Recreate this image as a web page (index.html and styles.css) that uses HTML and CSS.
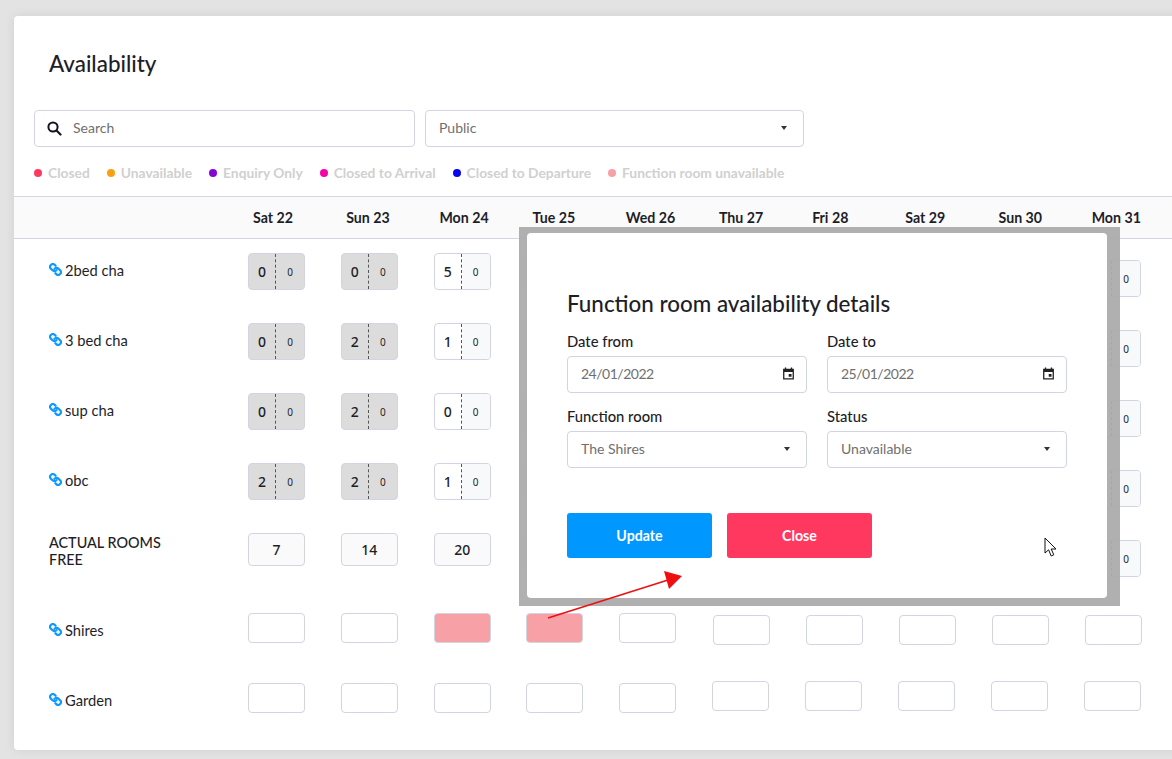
FILE: index.html
```html
<!DOCTYPE html>
<html lang="en">
<head>
  <meta charset="UTF-8">
  <title>Availability</title>
  <link rel="stylesheet" href="styles.css">
</head>
<body>
  <svg class="defs" width="0" height="0">
    <symbol id="chain" viewBox="0 0 24 24">
      <g transform="translate(24 0) scale(-1 1)" fill="none" stroke="currentColor" stroke-width="4" stroke-linecap="round" stroke-linejoin="round">
        <path d="M10 13a5 5 0 0 0 7.54.54l3-3a5 5 0 0 0-7.07-7.07l-1.72 1.71"/>
        <path d="M14 11a5 5 0 0 0-7.54-.54l-3 3a5 5 0 0 0 7.07 7.07l1.71-1.71"/>
      </g>
    </symbol>
    <symbol id="calendar" viewBox="0 0 12 12">
      <path fill="currentColor" d="M1 1.6h1.6V.4h1.3v1.2h4.2V.4h1.3v1.2H11v10H1zM2.2 4.6v5.8h7.6V4.6zM6.2 6.4h2.6V9H6.2z"/>
    </symbol>
  </svg>

  <div class="card">
    <h1>Availability</h1>

    <div class="filters">
      <div class="field search">
        <svg class="search-icon" width="15" height="15" viewBox="0 0 15 15">
          <circle cx="6" cy="6" r="4.6" fill="none" stroke="#14141e" stroke-width="2"/>
          <path d="M9.5 9.5l4 4" stroke="#14141e" stroke-width="2.2" stroke-linecap="round"/>
        </svg>
        <span>Search</span>
      </div>
      <div class="field select public"><span>Public</span><i class="caret"></i></div>
    </div>

    <ul class="legend">
      <li><i class="dot" style="background:#ff3860"></i>Closed</li>
      <li><i class="dot" style="background:#f9a011"></i>Unavailable</li>
      <li><i class="dot" style="background:#8505d6"></i>Enquiry Only</li>
      <li><i class="dot" style="background:#f505a8"></i>Closed to Arrival</li>
      <li><i class="dot" style="background:#0505f0"></i>Closed to Departure</li>
      <li><i class="dot" style="background:#f7a0a6"></i>Function room unavailable</li>
    </ul>

    <div class="days">
      <span>Sat 22</span><span>Sun 23</span><span>Mon 24</span><span>Tue 25</span><span>Wed 26</span>
      <span>Thu 27</span><span>Fri 28</span><span>Sat 29</span><span>Sun 30</span><span>Mon 31</span>
    </div>

    <div class="row">
      <div class="label"><svg class="chain"><use href="#chain"/></svg>2bed cha</div>
      <div class="cell split busy"><b>0</b><small>0</small></div>
      <div class="cell split busy"><b>0</b><small>0</small></div>
      <div class="cell split"><b>5</b><small>0</small></div>
      <div class="cell split"></div>
      <div class="cell split"></div>
      <div class="cell split"></div>
      <div class="cell split"></div>
      <div class="cell split"></div>
      <div class="cell split"></div>
      <div class="cell split last"><b></b><small>0</small></div>
    </div>
    <div class="row">
      <div class="label"><svg class="chain"><use href="#chain"/></svg>3 bed cha</div>
      <div class="cell split busy"><b>0</b><small>0</small></div>
      <div class="cell split busy"><b>2</b><small>0</small></div>
      <div class="cell split"><b>1</b><small>0</small></div>
      <div class="cell split"></div>
      <div class="cell split"></div>
      <div class="cell split"></div>
      <div class="cell split"></div>
      <div class="cell split"></div>
      <div class="cell split"></div>
      <div class="cell split last"><b></b><small>0</small></div>
    </div>
    <div class="row">
      <div class="label"><svg class="chain"><use href="#chain"/></svg>sup cha</div>
      <div class="cell split busy"><b>0</b><small>0</small></div>
      <div class="cell split busy"><b>2</b><small>0</small></div>
      <div class="cell split"><b>0</b><small>0</small></div>
      <div class="cell split"></div>
      <div class="cell split"></div>
      <div class="cell split"></div>
      <div class="cell split"></div>
      <div class="cell split"></div>
      <div class="cell split"></div>
      <div class="cell split last"><b></b><small>0</small></div>
    </div>
    <div class="row">
      <div class="label"><svg class="chain"><use href="#chain"/></svg>obc</div>
      <div class="cell split busy"><b>2</b><small>0</small></div>
      <div class="cell split busy"><b>2</b><small>0</small></div>
      <div class="cell split"><b>1</b><small>0</small></div>
      <div class="cell split"></div>
      <div class="cell split"></div>
      <div class="cell split"></div>
      <div class="cell split"></div>
      <div class="cell split"></div>
      <div class="cell split"></div>
      <div class="cell split last"><b></b><small>0</small></div>
    </div>
    <div class="row tall">
      <div class="label total">ACTUAL ROOMS<br>FREE</div>
      <div class="cell sum">7</div>
      <div class="cell sum">14</div>
      <div class="cell sum">20</div>
      <div class="cell sum"></div>
      <div class="cell sum"></div>
      <div class="cell sum"></div>
      <div class="cell sum"></div>
      <div class="cell sum"></div>
      <div class="cell sum"></div>
      <div class="cell split last"><b></b><small>0</small></div>
    </div>
    <div class="row">
      <div class="label"><svg class="chain"><use href="#chain"/></svg>Shires</div>
      <div class="cell empty"></div>
      <div class="cell empty"></div>
      <div class="cell empty off"></div>
      <div class="cell empty off"></div>
      <div class="cell empty"></div>
      <div class="cell empty low"></div>
      <div class="cell empty low"></div>
      <div class="cell empty low"></div>
      <div class="cell empty low"></div>
      <div class="cell empty low"></div>
    </div>
    <div class="row">
      <div class="label"><svg class="chain"><use href="#chain"/></svg>Garden</div>
      <div class="cell empty"></div>
      <div class="cell empty"></div>
      <div class="cell empty"></div>
      <div class="cell empty"></div>
      <div class="cell empty"></div>
      <div class="cell empty high"></div>
      <div class="cell empty high"></div>
      <div class="cell empty high"></div>
      <div class="cell empty high"></div>
      <div class="cell empty high"></div>
    </div>
  </div>

  <div class="modal-frame">
    <div class="modal">
      <h2>Function room availability details</h2>
      <div class="form-grid">
        <div class="form-group">
          <label>Date from</label>
          <div class="field date"><span>24/01/2022</span><svg class="cal"><use href="#calendar"/></svg></div>
        </div>
        <div class="form-group">
          <label>Date to</label>
          <div class="field date"><span>25/01/2022</span><svg class="cal"><use href="#calendar"/></svg></div>
        </div>
        <div class="form-group">
          <label>Function room</label>
          <div class="field select"><span>The Shires</span><i class="caret"></i></div>
        </div>
        <div class="form-group">
          <label>Status</label>
          <div class="field select"><span>Unavailable</span><i class="caret"></i></div>
        </div>
      </div>
      <div class="actions">
        <button class="btn update">Update</button>
        <button class="btn close">Close</button>
      </div>
    </div>
  </div>

  <!-- annotation drawn on top of the screenshot -->
  <svg class="arrow" width="150" height="60" viewBox="0 0 150 60">
    <path d="M2 47L122 9" stroke="#f00f0f" stroke-width="1.6"/>
    <path d="M136 5L118 0L123 18z" fill="#f00f0f"/>
  </svg>
  <svg class="cursor" width="14" height="20" viewBox="0 0 14 20">
    <path d="M1 1v15l3.6-3.2L7.2 19l2.6-1.2-2.6-5.8H12z" fill="#fff" stroke="#111" stroke-width="1"/>
  </svg>
</body>
</html>
```

FILE: styles.css
```css
* {
  box-sizing: border-box;
}

html, body {
  height: 100%;
}

body {
  margin: 0;
  overflow: hidden;
  position: relative;
  background: #e3e3e3;
  font-family: Lato, "Noto Sans", sans-serif;
  color: #1e1e28;
}

.defs {
  position: absolute;
}

.card {
  width: 1180px;
  height: 734px;
  margin: 16px 0 0 14px;
  overflow: hidden;
  background: #fff;
  border-radius: 4px 0 0 4px;
  box-shadow: 0 0 12px rgba(0,0,0,0.08);
}

h1 {
  margin: 0;
  padding: 34px 0 0 35px;
  height: 94px;
  font-size: 22.4px;
  line-height: 27px;
  font-weight: 500;
}

.filters {
  display: flex;
  gap: 10px;
  padding-left: 20px;
}

.field {
  display: flex;
  align-items: center;
  justify-content: space-between;
  height: 37px;
  padding: 0 13px 2px;
  background: #fff;
  border: 1px solid #d3d4e2;
  border-radius: 4px;
  font-size: 14px;
  color: #6f6f6f;
}

.field.date {
  padding-right: 11px;
  letter-spacing: -0.5px;
}

.search {
  justify-content: flex-start;
  gap: 11px;
  width: 381px;
  padding-left: 12px;
}

.search-icon {
  flex: none;
  margin-top: 1px;
}

.public {
  width: 379px;
}

.caret {
  width: 0;
  height: 0;
  margin-right: 3px;
  border-left: 3.5px solid transparent;
  border-right: 3.5px solid transparent;
  border-top: 4px solid #333;
}

.legend {
  display: flex;
  align-items: flex-start;
  gap: 17px;
  height: 49px;
  margin: 0;
  padding: 17px 0 0 20px;
  list-style: none;
  font-size: 13.8px;
  line-height: 17px;
  font-weight: 700;
  color: #d0d0d0;
}

.legend li {
  display: flex;
  align-items: center;
  gap: 6px;
}

.dot {
  width: 8px;
  height: 8px;
  border-radius: 50%;
}

.days {
  display: grid;
  grid-template-columns: repeat(10, 93.2px);
  align-items: center;
  height: 43px;
  margin-bottom: -1px;
  padding-left: 239px;
  background: #fafafb;
  border-top: 1px solid #d5d6e4;
  border-bottom: 1px solid #d5d6e4;
  font-size: 14.2px;
  font-weight: 700;
}

.row {
  display: grid;
  grid-template-columns: 234px repeat(8, 92.83px) 93.4px 93px;
  height: 70px;
}

.row.tall {
  height: 80px;
}

.label {
  display: flex;
  align-items: center;
  height: 64px;
  padding-left: 35px;
  font-size: 14.7px;
}

.label.total {
  display: block;
  height: auto;
  padding-top: 16px;
  font-size: 14.4px;
  line-height: 17px;
  font-weight: 500;
}

.chain {
  width: 13px;
  height: 13px;
  margin: -2px 3px 0 0;
  color: #0d99ff;
}

.cell {
  width: 57px;
  margin-top: 15px;
  border: 1px solid #d3d4e2;
  border-radius: 4px;
  align-self: start;
}

.split {
  display: grid;
  grid-template-columns: 27px 1fr;
  height: 37px;
  overflow: hidden;
  background: #fff;
  font-family: "Noto Sans", sans-serif;
}

.split b, .split small {
  display: flex;
  align-items: center;
  justify-content: center;
}

.split b {
  font-size: 14px;
  font-weight: 500;
  border-right: 1px dashed #555;
}

.split small {
  font-size: 10px;
  background: #f7f9fb;
}

.split.busy {
  background: #dcdcdc;
}

.split.busy small {
  background: none;
}

.split.last {
  margin-top: 22px;
}

.sum {
  height: 33px;
  background: #fafafb;
  font-family: "Noto Sans", sans-serif;
  font-size: 14px;
  font-weight: 500;
  line-height: 31px;
  text-align: center;
}

.empty {
  height: 30px;
  background: #fff;
}

.empty.off {
  background: #f7a0a6;
}

.empty.low {
  margin-top: 17px;
  margin-left: 1px;
}

.empty.high {
  margin-top: 13px;
}

/* modal sits over the table */
.modal-frame {
  position: absolute;
  left: 519px;
  top: 227px;
  width: 601px;
  height: 379px;
  padding: 6px 13px 8px 8px;
  background: rgba(172,172,172,0.95);
}

.modal {
  height: 100%;
  padding: 58px 40px 0;
  background: #fff;
  border-radius: 4px;
}

h2 {
  margin: 0 0 15px;
  font-size: 22.4px;
  line-height: 26px;
  font-weight: 500;
}

.form-grid {
  display: grid;
  grid-template-columns: 240px 240px;
  column-gap: 20px;
  row-gap: 14px;
}

.form-group label {
  display: block;
  margin-bottom: 6px;
  font-size: 14.8px;
  line-height: 18px;
  font-weight: 500;
}

.cal {
  width: 13px;
  height: 13px;
  color: #222;
}

.actions {
  display: flex;
  gap: 15px;
  margin-top: 45px;
}

.btn {
  width: 145px;
  height: 45px;
  border: none;
  border-radius: 3px;
  font-family: inherit;
  font-size: 14.2px;
  font-weight: 700;
  color: #fff;
}

.update {
  background: #0098ff;
}

.close {
  background: #ff3860;
}

.arrow {
  position: absolute;
  left: 546px;
  top: 571px;
}

.cursor {
  position: absolute;
  left: 1044px;
  top: 537px;
}
```
